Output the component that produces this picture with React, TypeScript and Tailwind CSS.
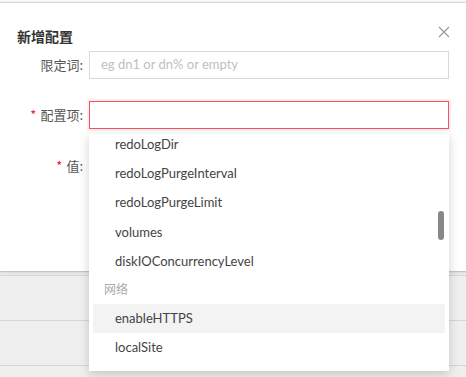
import React from "react";

const latin = { fontFamily: 'Lato, "Noto Sans CJK SC", sans-serif' };
const cjk = { fontFamily: '"Noto Sans CJK SC", sans-serif' };

export default function App() {
  const items1 = [
    "redoLogDir",
    "redoLogPurgeInterval",
    "redoLogPurgeLimit",
    "volumes",
    "diskIOConcurrencyLevel",
  ];
  return (
    <div className="relative w-[466px] h-[377px] overflow-hidden bg-white" style={latin}>
      {/* page strip above modal */}
      <div className="h-[3px] bg-[#f7f7f7] border-b border-[#dcdcdc]" />
      {/* modal */}
      <div className="relative h-[268px] bg-white shadow-[0_1px_3px_rgba(0,0,0,0.15)]">
        <div className="flex items-center justify-between pl-[17px] pr-[17px] pt-[21px] h-[45px]">
          <span className="text-[14px] font-bold text-[#333]" style={cjk}>
            新增配置
          </span>
          <svg width="12" height="12" viewBox="0 0 12 12" className="mb-[8px] mr-[-1px]">
            <path d="M1 1L11 11M11 1L1 11" stroke="#999" strokeWidth="1.2" />
          </svg>
        </div>
        <div className="flex items-center h-[28px] mt-[3px]">
          <div className="w-[89px] pr-[6px] text-right text-[13px] text-[#555]" style={cjk}>
            限定词:
          </div>
          <div className="w-[360px] h-[28px] border border-[#d9d9d9] flex items-center pl-[11px] text-[13px] text-[#c0c0c0]">
            eg dn1 or dn% or empty
          </div>
        </div>
        <div className="flex items-center h-[28px] mt-[22px]">
          <div className="w-[89px] pr-[6px] text-right text-[13px] text-[#555]" style={cjk}>
            <span className="text-[#f5222d] mr-[4px]">*</span>配置项:
          </div>
          <div className="w-[360px] h-[28px] border border-[#f0545c] shadow-[0_0_0_2px_rgba(245,34,45,0.08)]" />
        </div>
        <div className="flex items-center h-[28px] mt-[23px]">
          <div className="w-[89px] pr-[6px] text-right text-[13px] text-[#555]" style={cjk}>
            <span className="text-[#f5222d] mr-[4px]">*</span>值:
          </div>
        </div>
      </div>
      {/* page below */}
      <div className="bg-[#efefef]">
        <div className="h-[4px] border-t border-[#d8d8d8] bg-[#ececec]" />
        <div className="h-[45px] border-t border-[#d4d4d4]" />
        <div className="h-[45px] border-t border-[#d6d6d6]" />
        <div className="h-[45px] border-t border-[#d6d6d6]" />
      </div>

      {/* dropdown */}
      <div className="absolute left-[89px] top-[134px] w-[360px] h-[237px] bg-white shadow-[0_3px_10px_rgba(0,0,0,0.18)] overflow-hidden">
        <div className="px-[4px] mt-[-4px]">
          {items1.map((t) => (
            <div key={t} className="h-[29.25px] flex items-center pl-[22px] text-[13px] text-[#444]">
              {t}
            </div>
          ))}
          <div className="h-[27.5px] flex items-center pl-[11px] pb-[3px] text-[12px] text-[#aaa]" style={cjk}>
            网络
          </div>
          <div className="h-[29px] flex items-center pl-[22px] text-[13px] text-[#444] bg-[#f3f3f3]">
            enableHTTPS
          </div>
          <div className="h-[29px] flex items-center pl-[22px] text-[13px] text-[#444]">
            localSite
          </div>
        </div>
        <div className="absolute left-[349px] top-[77px] w-[6px] h-[29px] rounded-full bg-[#888]" />
      </div>
    </div>
  );
}
